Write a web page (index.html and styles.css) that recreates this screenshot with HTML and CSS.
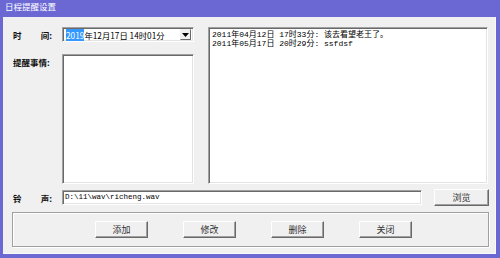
FILE: index.html
```html
<!DOCTYPE html>
<html>
<head>
<meta charset="utf-8">
<link rel="stylesheet" href="styles.css">
</head>
<body>
<div class="window">
  <div class="titlebar">日程提醒设置</div>
  <div class="client">
    <div class="main">
      <div class="form">
        <div class="label"><span>时</span><span>间:</span></div>
        <div class="combo">
          <span class="combo-text"><span class="sel">2019</span>年12月17日 14时01分</span>
          <span class="drop"><svg width="7" height="4" viewBox="0 0 7 4"><path d="M0 0H7L3.5 4Z" fill="#000"/></svg></span>
        </div>
        <div class="label label-top"><span>提醒事情:</span></div>
        <div class="field textarea"></div>
      </div>
      <div class="field list">
        <div>2011年04月12日 17时33分: 该去看望老王了。</div>
        <div>2011年05月17日 20时29分: ssfdsf</div>
      </div>
    </div>
    <div class="sound">
      <div class="label"><span>铃</span><span>声:</span></div>
      <div class="field input">D:\11\wav\richeng.wav</div>
      <button class="btn browse">浏览</button>
    </div>
    <div class="group">
      <button class="btn">添加</button>
      <button class="btn">修改</button>
      <button class="btn">删除</button>
      <button class="btn">关闭</button>
    </div>
  </div>
</div>
</body>
</html>
```

FILE: styles.css
```css
* { box-sizing: border-box; }
html, body { margin: 0; padding: 0; }
body { width: 500px; height: 258px; overflow: hidden; }

.window {
  width: 500px;
  height: 258px;
  background: #6b68d4;
  display: flex;
  flex-direction: column;
}

.titlebar {
  height: 17px;
  line-height: 17px;
  padding-left: 5px;
  color: #fff;
  font: 8.5px "Noto Sans CJK SC", sans-serif;
}

.client {
  flex: 1;
  margin: 0 4px 4px 3px;
  background: #f0f0f0;
  border-right: 1px solid #fafafa;
  border-bottom: 1px solid #fafafa;
  padding: 10px 6px 0 9px;
}

.main {
  display: flex;
  height: 157px;
}

.form {
  display: grid;
  grid-template-columns: 50px 132px;
  grid-template-rows: 15px 130px;
  row-gap: 12px;
}

.label {
  display: flex;
  justify-content: space-between;
  align-items: center;
  width: 40px;
  padding-left: 1px;
  font: bold 8.5px "Noto Sans CJK SC", sans-serif;
  color: #111;
}

.label-top {
  align-items: flex-start;
  padding-top: 2px;
}

.field {
  background: #fff;
  border: 1px solid;
  border-color: #a0a0a0 #fff #fff #a0a0a0;
  box-shadow: inset 1px 1px 0 #696969, inset -1px -1px 0 #e3e3e3;
}

.combo {
  display: flex;
  align-items: center;
  background: #fff;
  border: 1px solid;
  border-color: #a0a0a0 #fff #fff #a0a0a0;
  box-shadow: inset 1px 1px 0 #696969, inset -1px -1px 0 #e3e3e3;
  padding: 2px 2px 2px 3px;
}

.combo-text {
  flex: 1;
  font: 8.3px "Noto Sans CJK SC", sans-serif;
  line-height: 10px;
  color: #000;
  white-space: nowrap;
}

.sel {
  background: #3399ff;
  color: #fff;
}

.drop {
  width: 11px;
  height: 11px;
  display: flex;
  align-items: center;
  justify-content: center;
  background: #f0f0f0;
  border: 1px solid;
  border-color: #f0f0f0 #696969 #696969 #f0f0f0;
}

.list {
  margin-left: 14px;
  width: 280px;
  height: 157px;
  padding: 2px 0 0 3px;
  font: 8px "Liberation Mono", "Noto Sans CJK SC", monospace;
  line-height: 9px;
  color: #000;
  white-space: nowrap;
}

.sound {
  display: flex;
  align-items: center;
  margin-top: 5px;
  height: 17px;
}

.sound .label { width: 40px; margin-right: 10px; }

.input {
  width: 361px;
  height: 15px;
  padding: 0 0 0 2px;
  font: 7.5px "Liberation Mono", monospace;
  line-height: 13px;
  color: #000;
  white-space: nowrap;
}

.btn {
  width: 53px;
  height: 17px;
  padding: 0;
  background: #f0f0f0;
  border: 1px solid;
  border-color: #fff #696969 #696969 #fff;
  box-shadow: inset -1px -1px 0 #a0a0a0;
  font: 9px "Noto Sans CJK SC", sans-serif;
  color: #333;
}

.browse {
  width: 55px;
  margin-left: 12px;
}

.group {
  margin-top: 6px;
  width: 477px;
  height: 35px;
  border: 1px solid #a0a0a0;
  box-shadow: inset 1px 1px 0 #fff, 1px 1px 0 #fff;
  display: flex;
  align-items: flex-start;
  gap: 35px;
  padding: 8px 0 0 82px;
}
```
